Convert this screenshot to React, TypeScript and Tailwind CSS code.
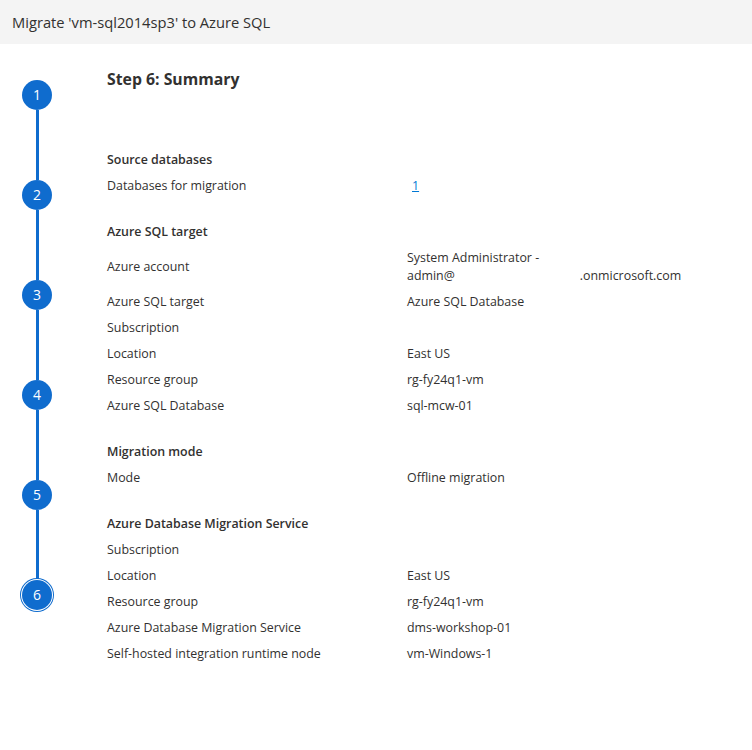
const font = { fontFamily: '"Open Sans", "Noto Sans", sans-serif' }

type Row = { label: string; value?: React.ReactNode; tall?: boolean }
type Section = { title: string; rows: Row[] }

const sections: Section[] = [
  {
    title: "Source databases",
    rows: [
      {
        label: "Databases for migration",
        value: <a className="ml-[5px] text-[#0078d4] underline">1</a>,
      },
    ],
  },
  {
    title: "Azure SQL target",
    rows: [
      {
        label: "Azure account",
        tall: true,
        value: (
          <div className="leading-[18px]">
            <div>System Administrator -</div>
            <div>
              admin@<span className="inline-block w-[125px]" />.onmicrosoft.com
            </div>
          </div>
        ),
      },
      { label: "Azure SQL target", value: "Azure SQL Database" },
      { label: "Subscription" },
      { label: "Location", value: "East US" },
      { label: "Resource group", value: "rg-fy24q1-vm" },
      { label: "Azure SQL Database", value: "sql-mcw-01" },
    ],
  },
  {
    title: "Migration mode",
    rows: [{ label: "Mode", value: "Offline migration" }],
  },
  {
    title: "Azure Database Migration Service",
    rows: [
      { label: "Subscription" },
      { label: "Location", value: "East US" },
      { label: "Resource group", value: "rg-fy24q1-vm" },
      { label: "Azure Database Migration Service", value: "dms-workshop-01" },
      { label: "Self-hosted integration runtime node", value: "vm-Windows-1" },
    ],
  },
]

function Stepper() {
  const steps = [1, 2, 3, 4, 5, 6]
  return (
    <div className="flex w-[107px] shrink-0 flex-col items-center pr-[33px] pt-[36px]">
      {steps.map((n) => (
        <div key={n} className="flex flex-col items-center">
          <div
            className={
              "flex h-[30px] w-[30px] items-center justify-center rounded-full bg-[#0f6cce] pb-px text-[14px] text-white " +
              (n === 6 ? "shadow-[0_0_0_1px_#ffffff,0_0_0_2px_#0f6cce]" : "")
            }
          >
            {n}
          </div>
          {n < 6 && <div className="h-[70px] w-[3px] bg-[#0f6cce]" />}
        </div>
      ))}
    </div>
  )
}

export default function App() {
  return (
    <div className="h-[750px] w-[752px] bg-white text-[#323130]" style={font}>
      {/* Header */}
      <div className="flex h-[44px] items-center bg-[#f4f4f4] px-3 text-[14.7px]">
        Migrate 'vm-sql2014sp3' to Azure SQL
      </div>

      <div className="flex">
        <Stepper />

        <div className="flex-1 pt-[23px]">
          <h2 className="text-[15.8px] font-bold leading-[24px]">Step 6: Summary</h2>

          <div className="pt-[56px]">
            {sections.map((s, i) => (
              <div key={s.title} className={i > 0 ? "mt-[20px]" : ""}>
                <div className="flex h-[26px] items-center text-[12.4px] font-semibold">{s.title}</div>
                {s.rows.map((r) => (
                  <div
                    key={r.label}
                    className={"flex items-center text-[12.4px] " + (r.tall ? "h-[44px]" : "h-[26px]")}
                  >
                    <div className="w-[300px] shrink-0">{r.label}</div>
                    <div>{r.value}</div>
                  </div>
                ))}
              </div>
            ))}
          </div>
        </div>
      </div>
    </div>
  )
}
